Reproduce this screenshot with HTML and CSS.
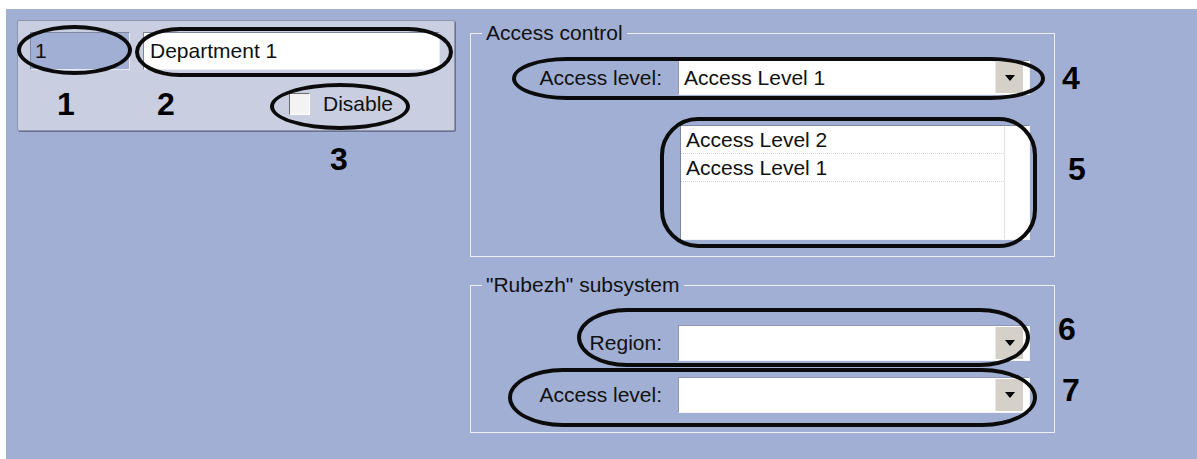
FILE: index.html
```html
<!DOCTYPE html>
<html>
<head>
<title>Department</title>
<link rel="stylesheet" href="styles.css">
</head>
<body>
<div class="screen">
  <div class="left">
    <div class="card">
      <div class="card-row">
        <div class="field field-id">1</div>
        <div class="field field-name">Department 1</div>
      </div>
      <div class="card-row card-row-marks">
        <span class="num num-1">1</span>
        <span class="num num-2">2</span>
        <span class="check"></span>
        <span class="check-label">Disable</span>
      </div>
      <span class="ring ring-1"></span>
      <span class="ring ring-2"></span>
      <span class="ring ring-3"></span>
    </div>
    <div class="num num-3">3</div>
  </div>

  <div class="right">
    <fieldset class="group group-access">
      <legend>Access control</legend>
      <div class="row row-first">
        <span class="label">Access level:</span>
        <div class="combo"><span class="combo-text">Access Level 1</span><span class="drop"></span></div>
        <span class="num num-4">4</span>
        <span class="ring ring-4"></span>
      </div>
      <div class="row row-list">
        <span></span>
        <div class="list">
          <div class="list-items">
            <div class="list-item">Access Level 2</div>
            <div class="list-item">Access Level 1</div>
          </div>
          <div class="list-scroll"></div>
        </div>
        <span class="num num-5">5</span>
        <span class="ring ring-5"></span>
      </div>
    </fieldset>

    <fieldset class="group group-rubezh">
      <legend>"Rubezh" subsystem</legend>
      <div class="row row-region">
        <span class="label">Region:</span>
        <div class="combo combo-tall"><span class="combo-text"></span><span class="drop"></span></div>
        <span class="num num-6">6</span>
        <span class="ring ring-6"></span>
      </div>
      <div class="row row-level">
        <span class="label">Access level:</span>
        <div class="combo combo-tall"><span class="combo-text"></span><span class="drop"></span></div>
        <span class="num num-7">7</span>
        <span class="ring ring-7"></span>
      </div>
    </fieldset>
  </div>
</div>
</body>
</html>
```

FILE: styles.css
```css
body {
  margin: 0;
  background-color: #fff;
  overflow: hidden;
}

.screen {
  display: flex;
  align-items: flex-start;
  height: 450px;
  margin: 9px 0 0 6px;
  background-color: #a0afd3;
  font-family: "Liberation Sans", Arial, sans-serif;
  font-size: 21px;
  color: #111;
}

.num {
  font-weight: bold;
  font-size: 32px;
  line-height: 32px;
  color: #000;
}

.ring {
  position: absolute;
  box-sizing: border-box;
  border: 4px solid #0b0b0b;
  border-radius: 50%;
  pointer-events: none;
}

/* left card */
.left {
  width: 438px;
  margin: 11px 0 0 11px;
}

.card {
  position: relative;
  box-sizing: border-box;
  height: 111px;
  padding: 11px 12px 0;
  background-color: #c9cee0;
  border: 1px solid #8e94ac;
  border-radius: 2px;
  box-shadow: 1px 1px 0 #6b7190;
}

.card-row {
  display: flex;
  gap: 13px;
}

.field {
  box-sizing: border-box;
  height: 38px;
  line-height: 36px;
  padding-left: 4px;
  border: 1px solid;
  border-color: #7f879f #e8ebf3 #e8ebf3 #7f879f;
}

.field-id {
  width: 100px;
  background-color: #a0afd3;
}

.field-name {
  width: 297px;
  padding-left: 6px;
  background-color: #fff;
}

.card-row-marks {
  align-items: center;
  gap: 0;
  height: 28px;
  margin-top: 20px;
  padding-left: 27px;
}

.num-1 {
  width: 100px;
}

.num-2 {
  width: 132px;
}

.check {
  box-sizing: border-box;
  width: 21px;
  height: 22px;
  margin-right: 13px;
  background-color: #f3f3f3;
  border: 1px solid;
  border-color: #6c6c6c #fff #fff #6c6c6c;
}

.num-3 {
  margin: 12px 0 0 313px;
}

.ring-1 {
  left: -1px;
  top: 4px;
  width: 115px;
  height: 50px;
}

.ring-2 {
  left: 117px;
  top: 6px;
  width: 318px;
  height: 50px;
  border-radius: 45px / 25px;
}

.ring-3 {
  left: 252px;
  top: 62px;
  width: 140px;
  height: 47px;
}

/* right groups */
.right {
  width: 585px;
  margin: 12px 0 0 15px;
}

.group {
  box-sizing: border-box;
  width: 585px;
  min-width: 0;
  margin: 0;
  padding: 0 24px 0 0;
  border: 1px solid #eef1f8;
}

.group legend {
  margin-left: 11px;
  padding: 0 4px;
  line-height: 24px;
}

.group-access {
  height: 236px;
}

.group-rubezh {
  height: 160px;
  margin-top: 16px;
}

.row {
  position: relative;
  display: grid;
  grid-template-columns: 1fr 352px 60px;
  margin-right: -60px;
}

.label {
  align-self: center;
  padding-right: 16px;
  text-align: right;
}

.row-first {
  margin-top: 15px;
}

.row-list {
  margin-top: 30px;
}

.row-region {
  margin-top: 28px;
}

.row-level {
  margin-top: 16px;
}

.combo {
  display: flex;
  box-sizing: border-box;
  height: 35px;
  padding: 1px 6px 1px 0;
  background-color: #fff;
  border: 1px solid;
  border-color: #8d97b4 #f3f5fa #f3f5fa #8d97b4;
}

.combo-tall {
  height: 36px;
}

.combo-text {
  flex: 1;
  padding-left: 5px;
  line-height: 31px;
}

.drop {
  display: flex;
  align-items: center;
  justify-content: center;
  width: 27px;
  background-color: #d5d1c9;
  border-left: 1px solid #ebe9e3;
}

.drop::before {
  content: "";
  border: 5px solid transparent;
  border-top: 6px solid #000;
  border-bottom: 0;
}

.list {
  display: flex;
  box-sizing: border-box;
  height: 115px;
  margin-left: 2px;
  background-color: #fff;
  border: 1px solid;
  border-color: #7d879f #f3f5fa #f3f5fa #7d879f;
}

.list-items {
  flex: 1;
}

.list-item {
  height: 28px;
  line-height: 27px;
  padding-left: 5px;
  border-bottom: 1px dotted #d6d6d6;
  box-sizing: border-box;
}

.list-scroll {
  width: 24px;
  border-left: 1px solid #e2e2e2;
}

.num-4 {
  align-self: center;
  padding-left: 32px;
}

.num-5 {
  align-self: start;
  margin-top: 28px;
  padding-left: 38px;
}

.num-6 {
  align-self: start;
  margin-top: -12px;
  padding-left: 28px;
}

.num-7 {
  align-self: start;
  margin-top: -3px;
  padding-left: 32px;
}

.ring-4 {
  left: 41px;
  right: 45px;
  top: -3px;
  bottom: -5px;
  border-radius: 55px / 50%;
}

.ring-5 {
  left: 189px;
  right: 53px;
  top: -8px;
  bottom: -8px;
  border-radius: 38px;
}

.ring-6 {
  left: 106px;
  right: 60px;
  top: -17px;
  bottom: -6px;
  border-radius: 50px / 50%;
}

.ring-7 {
  left: 37px;
  right: 53px;
  top: -9px;
  bottom: -14px;
  border-radius: 55px / 50%;
}
```
